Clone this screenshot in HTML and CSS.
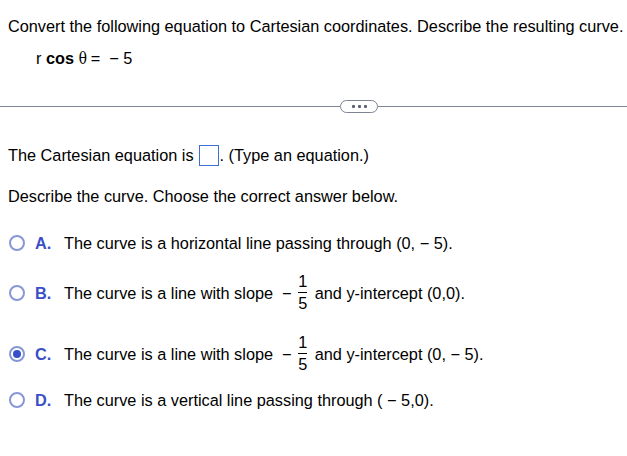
FILE: index.html
```html
<!DOCTYPE html>
<html>
<head>
<meta charset="utf-8">
<link rel="stylesheet" href="styles.css">
</head>
<body>
<div class="top">
  <p class="question">Convert the following equation to Cartesian coordinates. Describe the resulting curve.</p>
  <p class="equation">r <b>cos</b> <span class="theta">θ</span> = &nbsp;− 5</p>
</div>
<div class="divider">
  <span class="line"></span>
  <span class="pill"><span class="dot"></span><span class="dot"></span><span class="dot"></span></span>
  <span class="line"></span>
</div>
<div class="bottom">
  <p class="answer">The Cartesian equation is <span class="box"></span>. (Type an equation.)</p>
  <p class="describe">Describe the curve. Choose the correct answer below.</p>
  <div class="options">
    <div class="option">
      <span class="radio"></span><span class="letter">A.</span>
      <span class="text">The curve is a horizontal line passing through (0, − 5).</span>
    </div>
    <div class="option">
      <span class="radio"></span><span class="letter">B.</span>
      <span class="text">The curve is a line with slope &nbsp;− <span class="frac"><span class="num">1</span><span class="den">5</span></span> and y-intercept (0,0).</span>
    </div>
    <div class="option">
      <span class="radio checked"></span><span class="letter">C.</span>
      <span class="text">The curve is a line with slope &nbsp;− <span class="frac"><span class="num">1</span><span class="den">5</span></span> and y-intercept (0, − 5).</span>
    </div>
    <div class="option">
      <span class="radio"></span><span class="letter">D.</span>
      <span class="text">The curve is a vertical line passing through ( − 5,0).</span>
    </div>
  </div>
</div>
</body>
</html>
```
FILE: styles.css
```css
* { box-sizing: border-box; }
body {
  margin: 0;
  font-family: "Liberation Sans", Arial, sans-serif;
  font-size: 16.3px;
  color: #000;
  background: #fff;
}
p { margin: 0; }
.top { padding: 17px 0 0 8px; }
.question { line-height: 18px; }
.equation { margin-top: 14px; padding-left: 28px; line-height: 18px; }
.equation b { font-weight: bold; }
.theta { font-family: "DejaVu Serif", serif; font-size: 16px; display: inline-block; transform: scaleX(0.85); margin: 0 -1px; }
.divider {
  display: flex;
  align-items: center;
  margin-top: 31px;
  height: 14px;
}
.line { flex: 1; height: 1px; background: #7d8593; }
.line:first-child { flex: 0 0 340px; }
.pill {
  width: 38px;
  height: 13px;
  border: 1px solid #7d8593;
  border-radius: 7px;
  display: flex;
  align-items: center;
  justify-content: center;
  gap: 3px;
  background: #fff;
}
.dot { width: 3px; height: 3px; background: #5a6270; border-radius: 1px; }
.bottom { padding: 31px 0 0 8px; }
.answer { line-height: 22px; display: flex; align-items: center; }
.box {
  display: inline-block;
  width: 20px;
  height: 21px;
  border: 1px solid #3b6fd4;
  margin: 0 1px 0 5px;
}
.describe { margin-top: 21px; line-height: 18px; }
.options { margin-top: 29px; }
.option {
  display: flex;
  align-items: center;
  height: 18px;
}
.option:nth-child(1) { margin-bottom: 32px; }
.option:nth-child(2) { margin-bottom: 43px; }
.option:nth-child(3) { margin-bottom: 28px; }
.radio {
  width: 16px;
  height: 16px;
  border: 2px solid #8797d6;
  border-radius: 50%;
  margin-left: 1px;
  display: flex;
  align-items: center;
  justify-content: center;
}
.radio.checked::after {
  content: "";
  width: 8px;
  height: 8px;
  border-radius: 50%;
  background: #3550c8;
}
.letter {
  color: #3a4fc6;
  font-weight: bold;
  margin-left: 10px;
  width: 29px;
}
.text { display: inline-flex; align-items: center; white-space: pre; }
.frac {
  display: inline-flex;
  flex-direction: column;
  align-items: center;
  margin: 0 3px 0 2px;
  position: relative;
  top: -1px;
}
.num { line-height: 18px; padding: 0 0 2px; border-bottom: 1px solid #000; }
.den { line-height: 18px; padding-top: 1px; }
```
